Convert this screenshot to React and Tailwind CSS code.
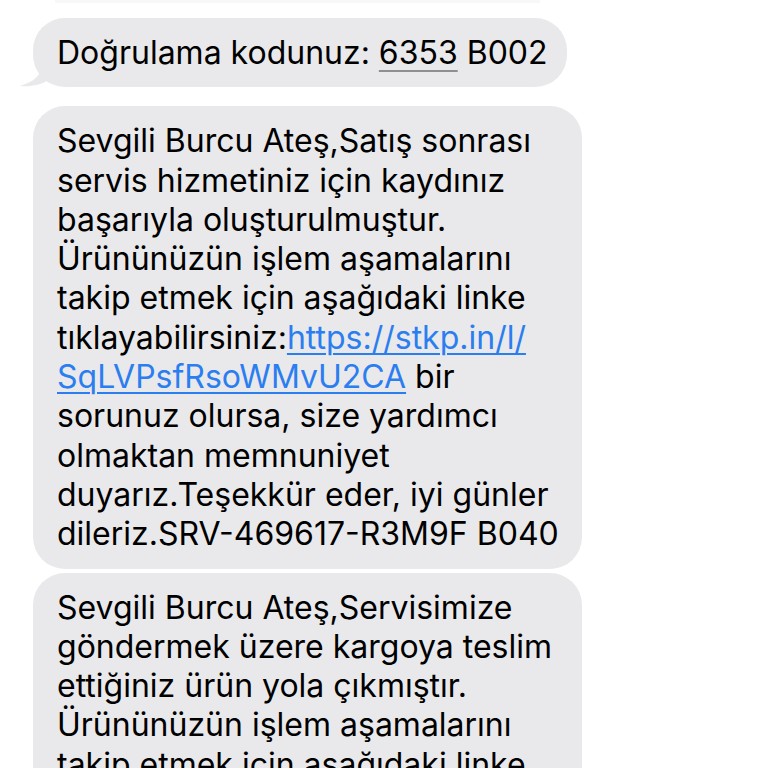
import React from "react";

const Link = ({ children }) => (
  <span className="text-[#2b7ef0] underline decoration-[#2b7ef0] decoration-[1.5px] underline-offset-[4px]">
    {children}
  </span>
);

const Bubble = ({ width, tail, className = "", children }) => (
  <div className={`relative ${className}`}>
    <div
      className={`${width} rounded-[32px] bg-[#e9e9eb] pl-6 pr-4 py-[15px] text-[32px] leading-[39.3px] text-black whitespace-nowrap`}
    >
      {children}
    </div>
    {tail && (
      <svg
        className="absolute left-[-13px] bottom-0"
        width="34"
        height="26"
        viewBox="0 0 34 26"
      >
        <path d="M22 0 C22 10 20 19 0 25 C10 26 22 24 30 18 L34 0 Z" fill="#e9e9eb" />
      </svg>
    )}
  </div>
);

const App = () => {
  return (
    <div
      className="w-[768px] h-[768px] overflow-hidden bg-white"
      style={{ fontFamily: "Inter, 'Noto Sans', sans-serif" }}
    >
      <div className="ml-[55px] h-[3px] w-[485px] bg-[#f8f8f9]" />

      <div className="pl-[33px] pt-[15px] flex flex-col">
        <Bubble width="w-[534px]" tail>
          Doğrulama kodunuz:{" "}
          <span className="underline decoration-[#8e8e93] decoration-[1.5px] underline-offset-[6px]">
            6353
          </span>{" "}
          B002
        </Bubble>

        <Bubble width="w-[549px]" className="mt-[19px]">
          <div>Sevgili Burcu Ateş,Satış sonrası</div>
          <div>servis hizmetiniz için kaydınız</div>
          <div>başarıyla oluşturulmuştur.</div>
          <div>Ürününüzün işlem aşamalarını</div>
          <div>takip etmek için aşağıdaki linke</div>
          <div>
            tıklayabilirsiniz:<Link>https://stkp.in/l/</Link>
          </div>
          <div>
            <Link>SqLVPsfRsoWMvU2CA</Link> bir
          </div>
          <div>sorunuz olursa, size yardımcı</div>
          <div>olmaktan memnuniyet</div>
          <div>duyarız.Teşekkür eder, iyi günler</div>
          <div>dileriz.SRV-469617-R3M9F B040</div>
        </Bubble>

        <Bubble width="w-[549px]" className="mt-[4px]">
          <div>Sevgili Burcu Ateş,Servisimize</div>
          <div>göndermek üzere kargoya teslim</div>
          <div>ettiğiniz ürün yola çıkmıştır.</div>
          <div>Ürününüzün işlem aşamalarını</div>
          <div>takip etmek için aşağıdaki linke</div>
          <div>tıklayabilirsiniz:</div>
        </Bubble>
      </div>
    </div>
  );
};

export default App;
